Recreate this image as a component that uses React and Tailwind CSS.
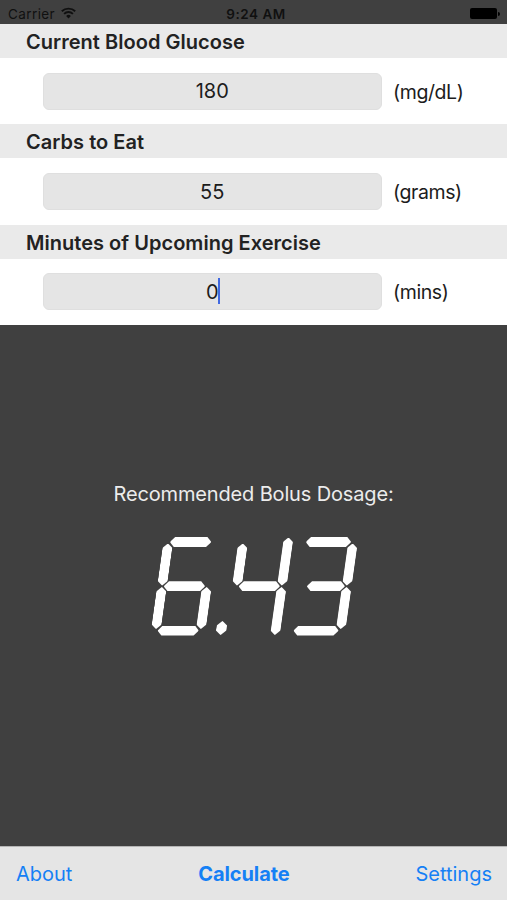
import { useState } from 'react';

const H_CLIP = '[clip-path:polygon(0_50%,1px_38%,4.5px_0,calc(100%-4.5px)_0,calc(100%-1px)_38%,100%_50%,calc(100%-1px)_62%,calc(100%-4.5px)_100%,4.5px_100%,1px_62%)]';
const V_CLIP = '[clip-path:polygon(38%_1px,50%_0,62%_1px,100%_4.5px,100%_calc(100%-4.5px),62%_calc(100%-1px),50%_100%,38%_calc(100%-1px),0_calc(100%-4.5px),0_4.5px)]';

// lit segments per digit: a top, b/c right, d bottom, e/f left, g middle
const DIGITS = {
  0: 'abcdef',
  1: 'bc',
  2: 'abged',
  3: 'abgcd',
  4: 'fgbc',
  5: 'afgcd',
  6: 'afgecd',
  7: 'abc',
  8: 'abcdefg',
  9: 'abcdfg',
};

const Digit = ({ value }) => {
  const lit = DIGITS[value] || '';
  const on = (s) => lit.includes(s);
  const h = `absolute h-[10px] bg-white right-[6.8px] ${H_CLIP}`;
  const v = `absolute w-[10px] bg-white ${V_CLIP}`;
  return (
    <div className="relative w-[54.8px] h-[98.6px]">
      {on('a') && <div className={`${h} top-0 ${on('f') ? 'left-[6.8px]' : 'left-[2.8px]'}`} />}
      {on('g') && <div className={`${h} top-[44.3px] ${on('f') ? 'left-[6.8px]' : 'left-[10px]'}`} />}
      {on('d') && <div className={`${h} bottom-0 ${on('e') ? 'left-[6.8px]' : 'left-[2.8px]'}`} />}
      {on('f') && <div className={`${v} left-0 top-[6.6px] h-[42px]`} />}
      {on('e') && <div className={`${v} left-0 bottom-[6.6px] h-[42px]`} />}
      {on('b') && <div className={`${v} right-0 bottom-[50px] ${on('a') ? 'top-[6.6px]' : 'top-[0.5px]'}`} />}
      {on('c') && <div className={`${v} right-0 top-[50px] ${on('d') ? 'bottom-[6.6px]' : 'bottom-[0.5px]'}`} />}
    </div>
  );
};

const Readout = ({ value }) => (
  <div role="img" aria-label={value} className="flex h-[98.6px] -skew-x-[8deg]">
    {value.split('').map((ch, i) =>
      ch === '.' ? (
        <div key={i} className={`w-[10.4px] h-[14px] mt-[84px] ml-[0.2px] -mr-[0.7px] bg-white ${V_CLIP}`} />
      ) : (
        <div key={i} className="mr-[10.2px] last:mr-0">
          <Digit value={ch} />
        </div>
      )
    )}
  </div>
);

const StatusBar = () => (
  <div className="h-[24.4px] shrink-0 grid grid-cols-3 items-center pl-2 pr-[7px] pt-[3px] text-[13.5px] text-[#101010]">
    <div className="flex items-center gap-[6px]">
      <span className="tracking-[0.4px]">Carrier</span>
      <svg width="15" height="12" viewBox="0 0 15 12" className="-mt-px" fill="none" stroke="#101010" strokeWidth="1.9">
        <path d="M0.8 4.3a9.6 9.6 0 0 1 13.4 0" />
        <path d="M3.1 6.9a6.2 6.2 0 0 1 8.8 0" />
        <path d="M7.5 11.5L5.1 9a3.4 3.4 0 0 1 4.8 0z" fill="#101010" stroke="none" />
      </svg>
    </div>
    <span className="pl-1 text-center font-semibold tracking-[0.5px]">9:24 AM</span>
    <div className="flex items-center justify-end">
      <div className="w-[27px] h-[11px] rounded-[2px] bg-black" />
      <div className="w-[2px] h-1 ml-px rounded-r-full bg-black" />
    </div>
  </div>
);

const Field = ({ label, unit, value, onChange, active }) => (
  <section className="h-[100.1px] shrink-0 bg-white">
    <h2 className="h-[34px] bg-[#eaeaea] pl-[26px] text-[20px] leading-[37.6px] font-semibold tracking-[0.03px] text-[#222]">
      {label}
    </h2>
    <div className="flex items-center pt-[14.3px] pl-[43px] text-[20px] text-[#1c1c1c]">
      <div className="relative w-[338.5px] h-[37.5px] rounded-[6px] border border-[#dfdfdf] bg-[#e5e5e5]">
        <input
          value={value}
          onChange={onChange}
          className="block w-full h-full text-center leading-[36px] outline-none"
        />
        {active && <div className="absolute left-[174px] top-[4px] w-[2px] h-[26px] bg-[#4169e1]" />}
      </div>
      <span className="ml-[11.5px] pt-[2px] text-[19.5px] tracking-[-0.4px]">{unit}</span>
    </div>
  </section>
);

const fields = [
  { name: 'glucose', label: 'Current Blood Glucose', unit: '(mg/dL)' },
  { name: 'carbs', label: 'Carbs to Eat', unit: '(grams)' },
  { name: 'exercise', label: 'Minutes of Upcoming Exercise', unit: '(mins)' },
];

const App = () => {
  const [form, setForm] = useState({ glucose: '180', carbs: '55', exercise: '0' });

  return (
    <div className="h-screen flex flex-col overflow-hidden bg-[#404040] font-['Inter',sans-serif]">
      <StatusBar />
      {fields.map((f) => (
        <Field
          key={f.name}
          label={f.label}
          unit={f.unit}
          value={form[f.name]}
          active={f.name === 'exercise'}
          onChange={(e) => setForm({ ...form, [f.name]: e.target.value })}
        />
      ))}
      <main className="flex-1 flex flex-col items-center pt-[154.3px]">
        <p className="text-[20px] leading-[30px] tracking-[-0.15px] text-[#ececec]">Recommended Bolus Dosage:</p>
        <div className="mt-[28.5px] ml-[1.6px]">
          <Readout value="6.43" />
        </div>
      </main>
      <nav className="h-[54px] shrink-0 flex justify-between items-center pl-4 pr-[15px] border-t border-[#b5b5b5] bg-[#e5e5e5] text-[20px] text-[#1580f5]">
        <button>About</button>
        <button className="font-bold tracking-[-0.1px]">Calculate</button>
        <button>Settings</button>
      </nav>
    </div>
  );
};

export default App;
